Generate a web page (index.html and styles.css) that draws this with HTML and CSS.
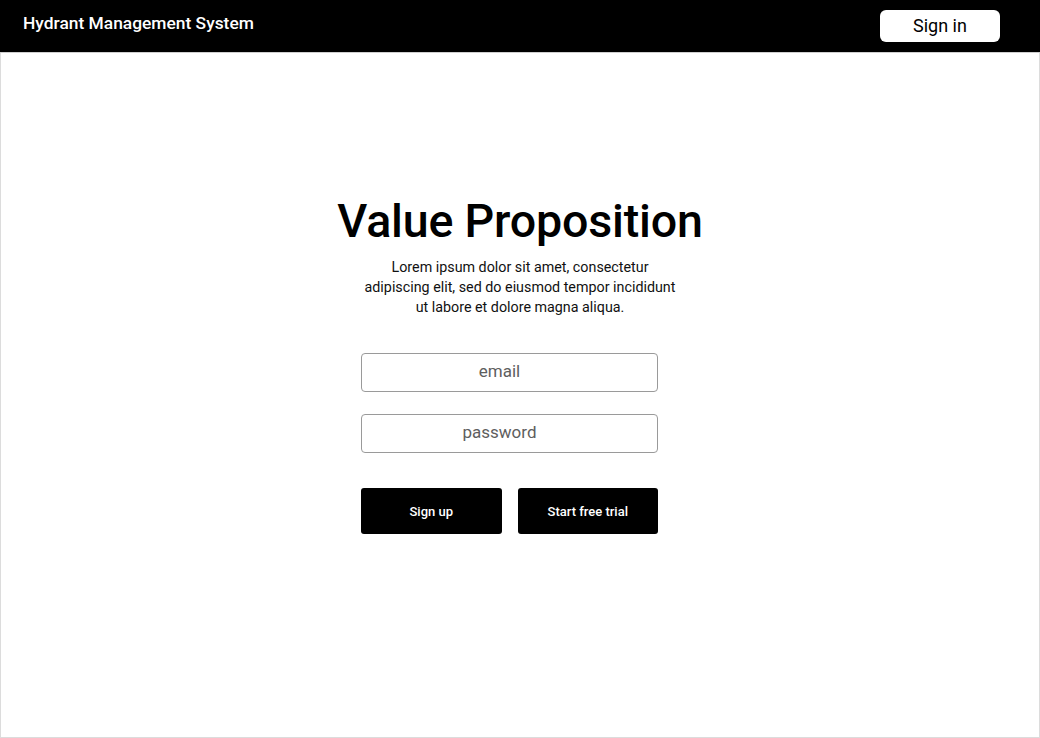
FILE: index.html
```html
<!DOCTYPE html>
<html lang="en">
<head>
<meta charset="utf-8">
<title>Hydrant Management System</title>
<link rel="stylesheet" href="styles.css">
</head>
<body>
<div class="frame">
  <header class="topbar">
    <div class="brand">Hydrant Management System</div>
    <button class="signin">Sign in</button>
  </header>
  <main class="hero">
    <h1 class="title">Value Proposition</h1>
    <p class="lead">Lorem ipsum dolor sit amet, consectetur adipiscing elit, sed do eiusmod tempor incididunt ut labore et dolore magna aliqua.</p>
    <form class="form">
      <input class="field" type="email" placeholder="email">
      <input class="field" type="password" placeholder="password">
      <div class="actions">
        <button type="button" class="btn">Sign up</button>
        <button type="button" class="btn">Start free trial</button>
      </div>
    </form>
  </main>
</div>
</body>
</html>
```
FILE: styles.css
```css
* { box-sizing: border-box; }
html, body { margin: 0; padding: 0; }
body {
  font-family: Roboto, "Liberation Sans", sans-serif;
  background: #fff;
  color: #000;
}
.frame {
  width: 1040px;
  height: 738px;
  border: 1px solid #dcdcdc;
  display: flex;
  flex-direction: column;
}
.topbar {
  height: 53px;
  margin: -1px -1px 0 -1px;
  background: #000;
  display: flex;
  align-items: flex-start;
  justify-content: space-between;
  padding: 12px 40px 0 23px;
  border-bottom: 1px solid #cfcfcf;
}
.brand {
  color: #fff;
  font-weight: 500;
  font-size: 17.4px;
  line-height: 22px;
}
.signin {
  margin-top: -2px;
  width: 120px;
  height: 32px;
  background: #fff;
  border: none;
  border-radius: 6px;
  font-family: inherit;
  font-size: 18px;
  color: #000;
  padding: 0;
  line-height: 32px;
}
.hero {
  display: flex;
  flex-direction: column;
  align-items: center;
  padding-top: 140px;
}
.title {
  margin: 0;
  font-size: 46.6px;
  font-weight: 500;
  line-height: 56px;
  letter-spacing: -0.2px;
}
.lead {
  margin: 8px 0 0 0;
  width: 322px;
  text-align: center;
  font-size: 14.3px;
  line-height: 20px;
  color: #111;
}
.form {
  margin: 36px 21px 0 0;
  width: 297px;
  display: flex;
  flex-direction: column;
}
.field {
  height: 39px;
  border: 1px solid #9a9a9a;
  border-radius: 4px;
  font-family: inherit;
  font-size: 17px;
  text-align: center;
  padding: 0 20px 4px 0;
  margin: 0 0 22px 0;
  outline: none;
}
.field::placeholder { color: #5e5e5e; }
.actions {
  margin-top: 13px;
  display: flex;
  gap: 16px;
}
.btn {
  flex: 1;
  height: 46px;
  background: #000;
  color: #fff;
  border: none;
  border-radius: 3px;
  font-family: inherit;
  font-size: 13px;
  font-weight: 500;
  padding: 0;
}
```
